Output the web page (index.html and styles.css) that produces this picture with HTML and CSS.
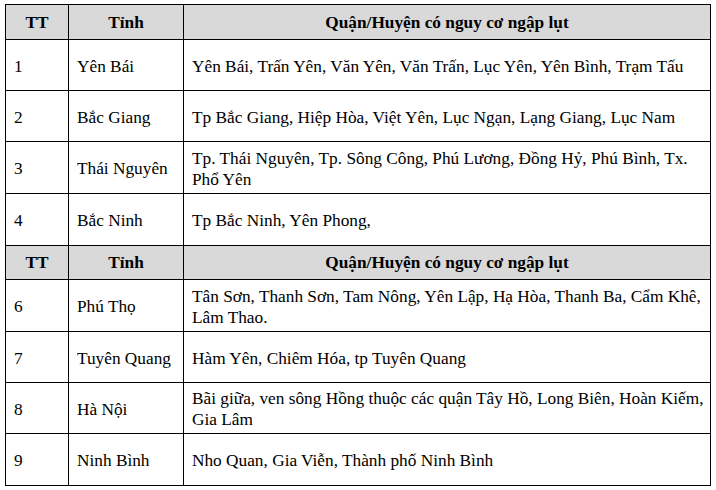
FILE: index.html
```html
<!DOCTYPE html>
<html lang="vi">
<head>
<meta charset="utf-8">
<title>Quận/Huyện có nguy cơ ngập lụt</title>
<link rel="stylesheet" href="styles.css">
</head>
<body>
<table class="flood">
  <colgroup>
    <col class="c-tt">
    <col class="c-tinh">
    <col class="c-qh">
  </colgroup>
  <tbody>
    <tr class="head h35">
      <th>TT</th>
      <th>Tỉnh</th>
      <th>Quận/Huyện có nguy cơ ngập lụt</th>
    </tr>
    <tr class="h51">
      <td>1</td>
      <td>Yên Bái</td>
      <td>Yên Bái, Trấn Yên, Văn Yên, Văn Trấn, Lục Yên, Yên Bình, Trạm Tấu</td>
    </tr>
    <tr class="h51">
      <td>2</td>
      <td>Bắc Giang</td>
      <td>Tp Bắc Giang, Hiệp Hòa, Việt Yên, Lục Ngạn, Lạng Giang, Lục Nam</td>
    </tr>
    <tr class="h52">
      <td>3</td>
      <td>Thái Nguyên</td>
      <td>Tp. Thái Nguyên, Tp. Sông Công, Phú Lương, Đồng Hỷ, Phú Bình, Tx. Phổ Yên</td>
    </tr>
    <tr class="h52">
      <td>4</td>
      <td>Bắc Ninh</td>
      <td>Tp Bắc Ninh, Yên Phong,</td>
    </tr>
    <tr class="head h34">
      <th>TT</th>
      <th>Tỉnh</th>
      <th>Quận/Huyện có nguy cơ ngập lụt</th>
    </tr>
    <tr class="h52">
      <td>6</td>
      <td>Phú Thọ</td>
      <td>Tân Sơn, Thanh Sơn, Tam Nông, Yên Lập, Hạ Hòa, Thanh Ba, Cẩm Khê, Lâm Thao.</td>
    </tr>
    <tr class="h51">
      <td>7</td>
      <td>Tuyên Quang</td>
      <td>Hàm Yên, Chiêm Hóa, tp Tuyên Quang</td>
    </tr>
    <tr class="h51">
      <td>8</td>
      <td>Hà Nội</td>
      <td>Bãi giữa, ven sông Hồng thuộc các quận Tây Hồ, Long Biên, Hoàn Kiếm, Gia Lâm</td>
    </tr>
    <tr class="h52">
      <td>9</td>
      <td>Ninh Bình</td>
      <td>Nho Quan, Gia Viễn, Thành phố Ninh Bình</td>
    </tr>
  </tbody>
</table>
</body>
</html>
```

FILE: styles.css
```css
html, body {
  margin: 0;
  padding: 0;
  background: #ffffff;
}

body {
  padding: 4px 0 0 5px;
  font-family: "Liberation Serif", "Times New Roman", serif;
  font-size: 17.3px;
  line-height: 21px;
  color: #000000;
}

.flood {
  border-collapse: collapse;
  table-layout: fixed;
  width: 705px;
}

.c-tt { width: 63px; }
.c-tinh { width: 115px; }
.c-qh { width: 527px; }

.flood th,
.flood td {
  border: 1px solid #000000;
  padding: 2px 2px 0 8px;
  vertical-align: middle;
  text-align: left;
}

.flood th {
  font-weight: bold;
  text-align: center;
  padding: 0 4px;
}

.head {
  background: #d9d9d9;
}

.h34 { height: 34px; }
.h35 { height: 35px; }
.h51 { height: 51px; }
.h52 { height: 52px; }
```
